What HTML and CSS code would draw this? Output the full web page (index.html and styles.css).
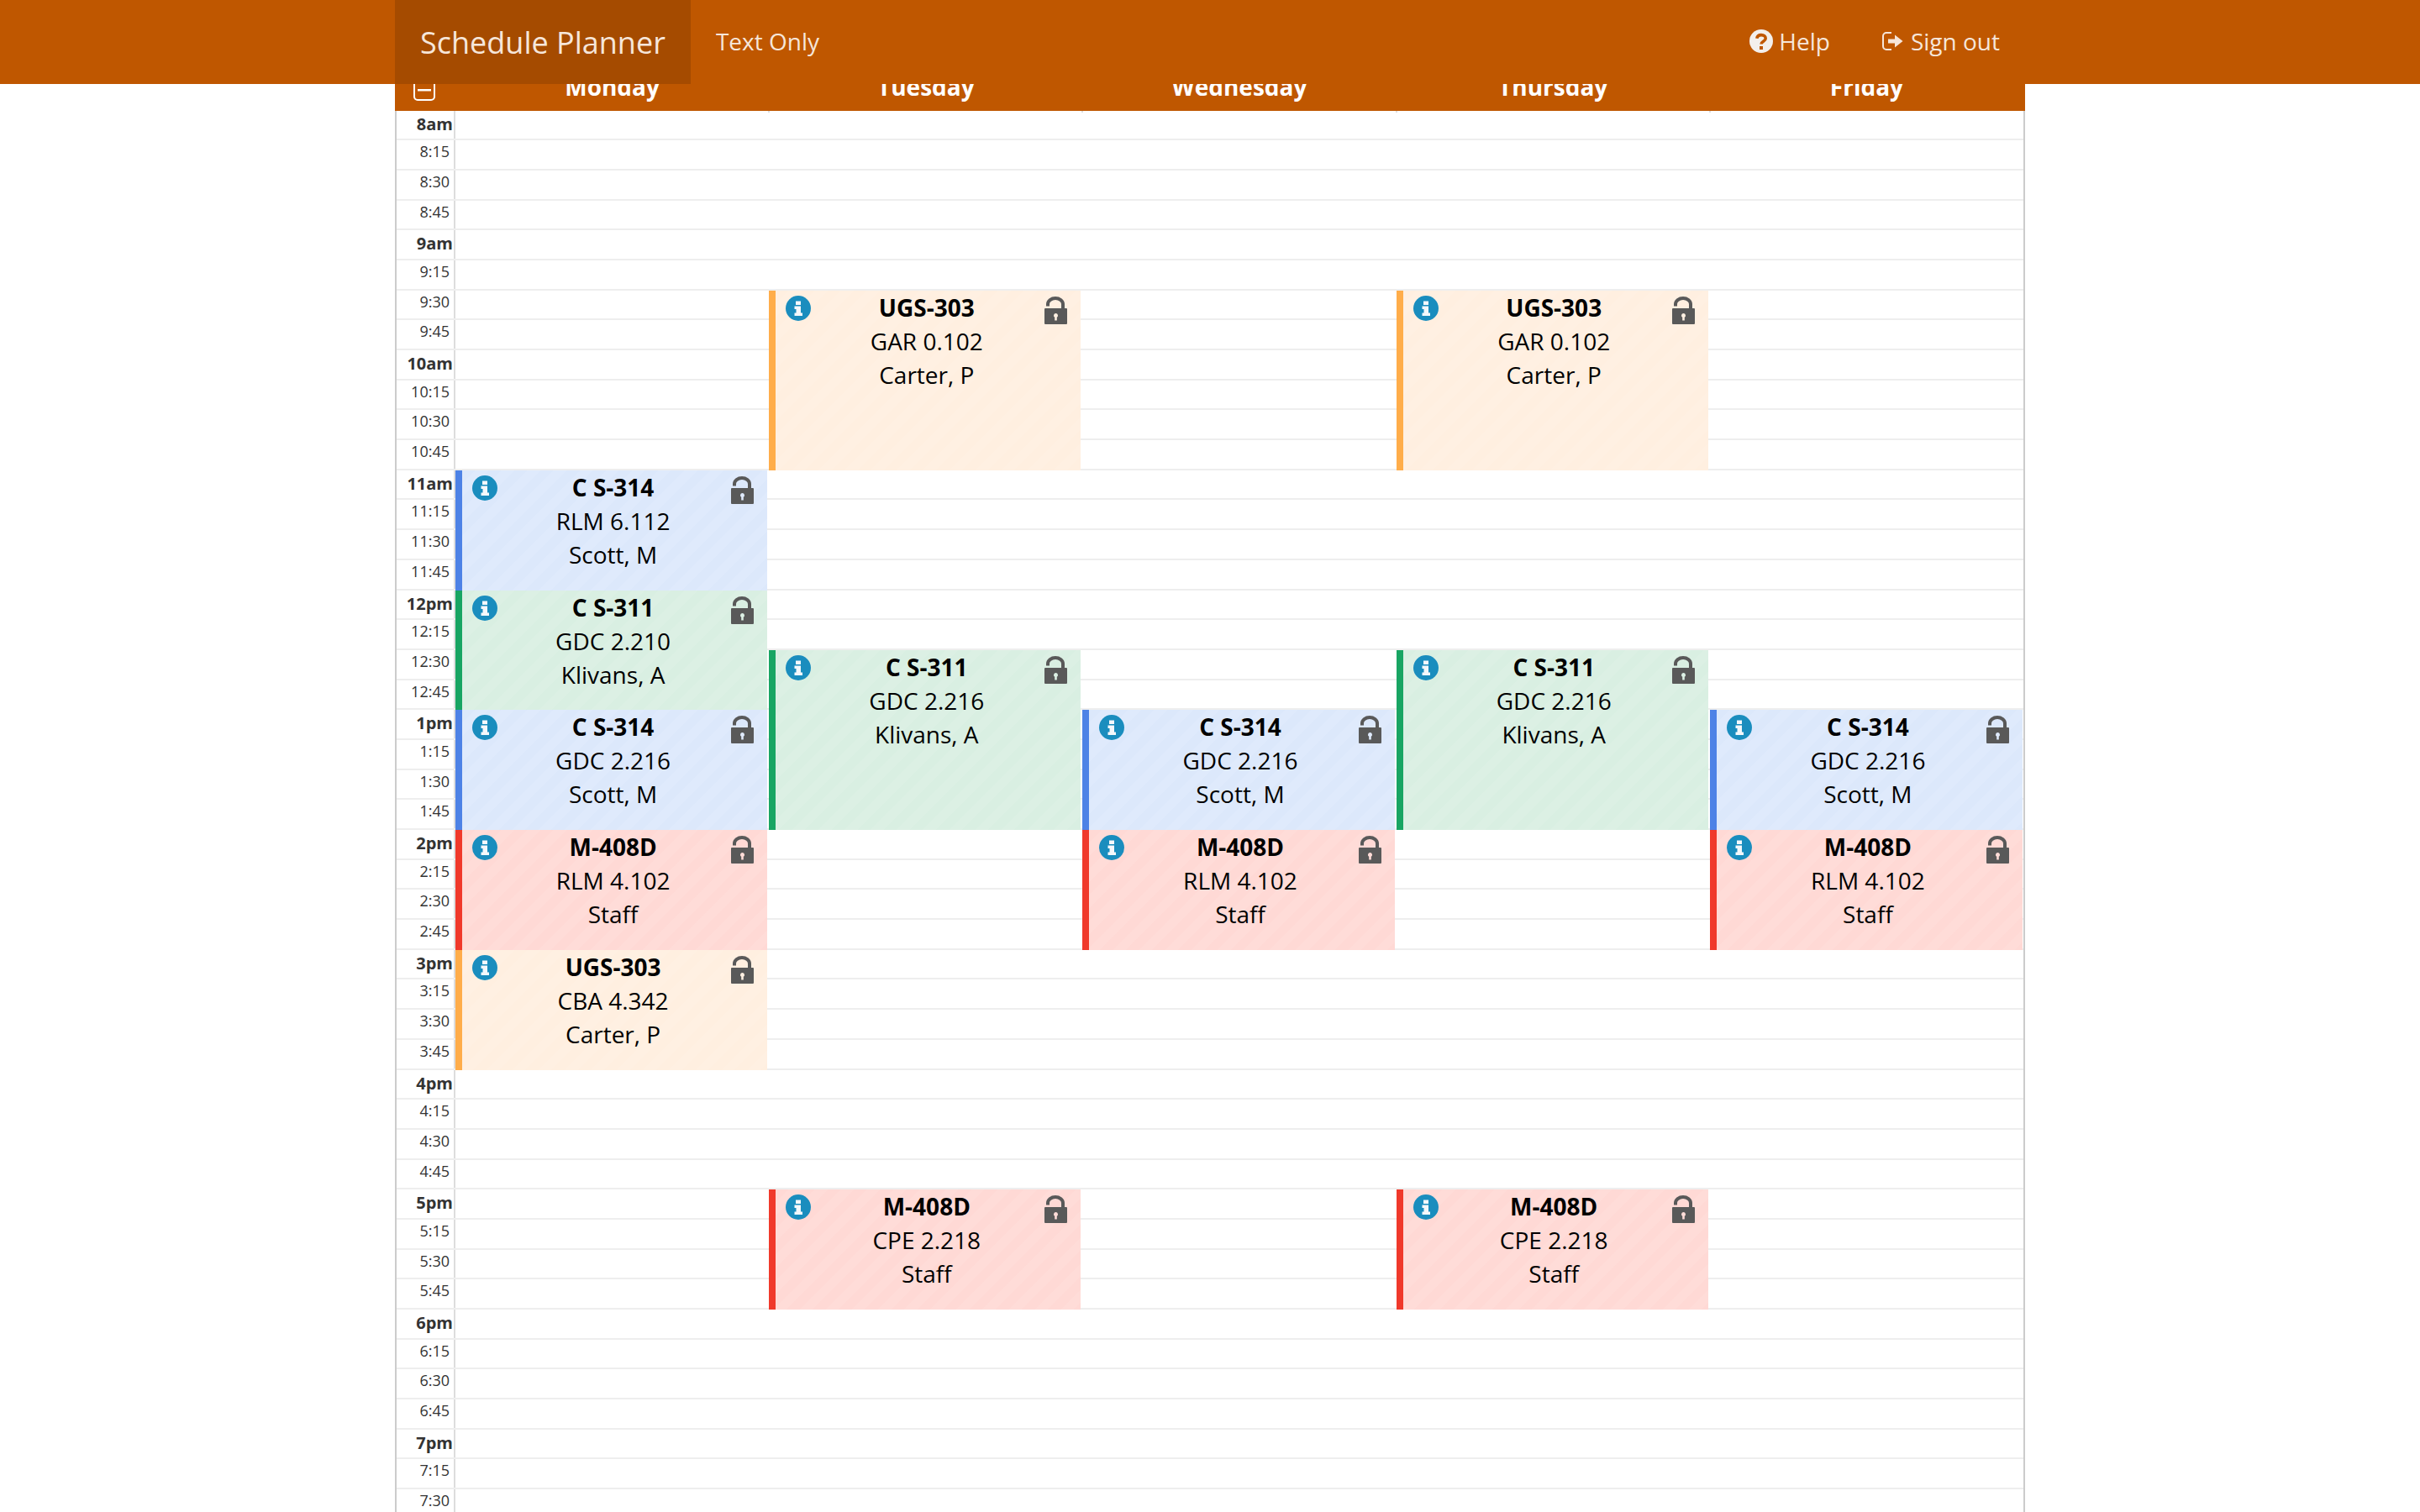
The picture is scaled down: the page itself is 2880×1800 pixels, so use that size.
FILE: index.html
```html
<!DOCTYPE html>
<html lang="en">
<head>
  <meta charset="UTF-8" />
  <title>Schedule Planner</title>
  <link rel="stylesheet" href="styles.css">
</head>
<body>

  <svg class="icon-defs" width="0" height="0">
    <symbol id="i-info" viewBox="0 0 30 30">
      <circle cx="15" cy="15" r="15" fill="#1a8dbe"/>
      <path fill="#f4f8fb" d="M12 6.500h6v4.500h-6zM10.500 12.500h7.500v8h2v3.500h-9.500v-3.500h2v-4.500h-2z"/>
    </symbol>
    <symbol id="i-lock" viewBox="0 0 27 33">
      <path fill="#595959" fill-rule="evenodd" d="M1 14h25a1 1 0 0 1 1 1v17a1 1 0 0 1-1 1h-25a1 1 0 0 1-1-1v-17a1 1 0 0 1 1-1zM13.500 20a2.600 2.600 0 0 0-1.300 4.800v3.700h2.600v-3.700a2.600 2.600 0 0 0-1.300-4.800z"/>
      <path fill="none" stroke="#595959" stroke-width="4" d="M4 11.500v-2.500a9 7 0 0 1 18 0v6"/>
    </symbol>
    <symbol id="i-help" viewBox="0 0 28 28">
      <circle cx="14" cy="14" r="14" fill="#f3efec"/>
      <path fill="none" stroke="#bf5700" stroke-width="3.600" d="M8.800 10.800c.4-2.800 2.500-4.200 5.200-4.200 3 0 5.200 1.700 5.200 4.100 0 3.600-5.200 3.500-5.200 6.900"/>
      <rect x="12" y="20" width="4" height="4" fill="#bf5700"/>
    </symbol>
    <symbol id="i-signout" viewBox="0 0 25 22">
      <path fill="none" stroke="#f6e6da" stroke-width="2" d="M11 1h-6a4 4 0 0 0-4 4v12a4 4 0 0 0 4 4h6"/>
      <path fill="#f6e6da" d="M7 8.500h8v-5l9.500 7.500-9.500 7.500v-5h-8z"/>
    </symbol>
    <symbol id="i-collapse" viewBox="0 0 26 32">
      <rect x="1" y="1" width="24" height="30" rx="4" fill="none" stroke="#fff" stroke-width="2"/>
      <rect x="5" y="18" width="16" height="2.500" fill="#fff"/>
    </symbol>
  </svg>

  <div class="page">

    <nav class="topbar">
      <div class="topbar-inner">
        <a class="brand">Schedule Planner</a>
        <a class="nav-link nav-text">Text Only</a>
        <div class="nav-right">
          <a class="nav-link nav-help"><svg class="help-icon"><use href="#i-help"/></svg>Help</a>
          <a class="nav-link nav-signout"><svg class="signout-icon"><use href="#i-signout"/></svg>Sign out</a>
        </div>
      </div>
    </nav>

    <div class="week-head">
      <div class="head-corner"><svg class="collapse-icon"><use href="#i-collapse"/></svg></div>
      <div class="head-day">Monday</div>
      <div class="head-day">Tuesday</div>
      <div class="head-day">Wednesday</div>
      <div class="head-day">Thursday</div>
      <div class="head-day">Friday</div>
    </div>

    <div class="week-grid">
      <div class="row"><div class="time hour">8am</div></div>
      <div class="row"><div class="time">8:15</div></div>
      <div class="row"><div class="time">8:30</div></div>
      <div class="row"><div class="time">8:45</div></div>
      <div class="row"><div class="time hour">9am</div></div>
      <div class="row"><div class="time">9:15</div></div>
      <div class="row"><div class="time">9:30</div></div>
      <div class="row"><div class="time">9:45</div></div>
      <div class="row"><div class="time hour">10am</div></div>
      <div class="row"><div class="time">10:15</div></div>
      <div class="row"><div class="time">10:30</div></div>
      <div class="row"><div class="time">10:45</div></div>
      <div class="row"><div class="time hour">11am</div></div>
      <div class="row"><div class="time">11:15</div></div>
      <div class="row"><div class="time">11:30</div></div>
      <div class="row"><div class="time">11:45</div></div>
      <div class="row"><div class="time hour">12pm</div></div>
      <div class="row"><div class="time">12:15</div></div>
      <div class="row"><div class="time">12:30</div></div>
      <div class="row"><div class="time">12:45</div></div>
      <div class="row"><div class="time hour">1pm</div></div>
      <div class="row"><div class="time">1:15</div></div>
      <div class="row"><div class="time">1:30</div></div>
      <div class="row"><div class="time">1:45</div></div>
      <div class="row"><div class="time hour">2pm</div></div>
      <div class="row"><div class="time">2:15</div></div>
      <div class="row"><div class="time">2:30</div></div>
      <div class="row"><div class="time">2:45</div></div>
      <div class="row"><div class="time hour">3pm</div></div>
      <div class="row"><div class="time">3:15</div></div>
      <div class="row"><div class="time">3:30</div></div>
      <div class="row"><div class="time">3:45</div></div>
      <div class="row"><div class="time hour">4pm</div></div>
      <div class="row"><div class="time">4:15</div></div>
      <div class="row"><div class="time">4:30</div></div>
      <div class="row"><div class="time">4:45</div></div>
      <div class="row"><div class="time hour">5pm</div></div>
      <div class="row"><div class="time">5:15</div></div>
      <div class="row"><div class="time">5:30</div></div>
      <div class="row"><div class="time">5:45</div></div>
      <div class="row"><div class="time hour">6pm</div></div>
      <div class="row"><div class="time">6:15</div></div>
      <div class="row"><div class="time">6:30</div></div>
      <div class="row"><div class="time">6:45</div></div>
      <div class="row"><div class="time hour">7pm</div></div>
      <div class="row"><div class="time">7:15</div></div>
      <div class="row"><div class="time">7:30</div></div>

      <div class="events">
        <!-- Monday -->
        <div class="event blue mon at-11 len-4">
          <svg class="info"><use href="#i-info"/></svg><svg class="lock"><use href="#i-lock"/></svg>
          <b>C S-314</b><span>RLM 6.112</span><span>Scott, M</span>
        </div>
        <div class="event green mon at-12 len-4">
          <svg class="info"><use href="#i-info"/></svg><svg class="lock"><use href="#i-lock"/></svg>
          <b>C S-311</b><span>GDC 2.210</span><span>Klivans, A</span>
        </div>
        <div class="event blue mon at-1 len-4">
          <svg class="info"><use href="#i-info"/></svg><svg class="lock"><use href="#i-lock"/></svg>
          <b>C S-314</b><span>GDC 2.216</span><span>Scott, M</span>
        </div>
        <div class="event red mon at-2 len-4">
          <svg class="info"><use href="#i-info"/></svg><svg class="lock"><use href="#i-lock"/></svg>
          <b>M-408D</b><span>RLM 4.102</span><span>Staff</span>
        </div>
        <div class="event orange mon at-3 len-4">
          <svg class="info"><use href="#i-info"/></svg><svg class="lock"><use href="#i-lock"/></svg>
          <b>UGS-303</b><span>CBA 4.342</span><span>Carter, P</span>
        </div>

        <!-- Tuesday -->
        <div class="event orange tue at-930 len-6">
          <svg class="info"><use href="#i-info"/></svg><svg class="lock"><use href="#i-lock"/></svg>
          <b>UGS-303</b><span>GAR 0.102</span><span>Carter, P</span>
        </div>
        <div class="event green tue at-1230 len-6">
          <svg class="info"><use href="#i-info"/></svg><svg class="lock"><use href="#i-lock"/></svg>
          <b>C S-311</b><span>GDC 2.216</span><span>Klivans, A</span>
        </div>
        <div class="event red tue at-5 len-4">
          <svg class="info"><use href="#i-info"/></svg><svg class="lock"><use href="#i-lock"/></svg>
          <b>M-408D</b><span>CPE 2.218</span><span>Staff</span>
        </div>

        <!-- Wednesday -->
        <div class="event blue wed at-1 len-4">
          <svg class="info"><use href="#i-info"/></svg><svg class="lock"><use href="#i-lock"/></svg>
          <b>C S-314</b><span>GDC 2.216</span><span>Scott, M</span>
        </div>
        <div class="event red wed at-2 len-4">
          <svg class="info"><use href="#i-info"/></svg><svg class="lock"><use href="#i-lock"/></svg>
          <b>M-408D</b><span>RLM 4.102</span><span>Staff</span>
        </div>

        <!-- Thursday -->
        <div class="event orange thu at-930 len-6">
          <svg class="info"><use href="#i-info"/></svg><svg class="lock"><use href="#i-lock"/></svg>
          <b>UGS-303</b><span>GAR 0.102</span><span>Carter, P</span>
        </div>
        <div class="event green thu at-1230 len-6">
          <svg class="info"><use href="#i-info"/></svg><svg class="lock"><use href="#i-lock"/></svg>
          <b>C S-311</b><span>GDC 2.216</span><span>Klivans, A</span>
        </div>
        <div class="event red thu at-5 len-4">
          <svg class="info"><use href="#i-info"/></svg><svg class="lock"><use href="#i-lock"/></svg>
          <b>M-408D</b><span>CPE 2.218</span><span>Staff</span>
        </div>

        <!-- Friday -->
        <div class="event blue fri at-1 len-4">
          <svg class="info"><use href="#i-info"/></svg><svg class="lock"><use href="#i-lock"/></svg>
          <b>C S-314</b><span>GDC 2.216</span><span>Scott, M</span>
        </div>
        <div class="event red fri at-2 len-4">
          <svg class="info"><use href="#i-info"/></svg><svg class="lock"><use href="#i-lock"/></svg>
          <b>M-408D</b><span>RLM 4.102</span><span>Staff</span>
        </div>
      </div>
    </div>

  </div>

</body>
</html>
```

FILE: styles.css
```css
:root {
  --orange: #bf5700;
  --orange-dark: #a54b00;
  --nav-text: #f6e6da;
  --row-h: 35.7px;
}
html, body {
  margin: 0;
  padding: 0;
  background: #fff;
}
body {
  font-family: "Open Sans", "Noto Sans", sans-serif;
  color: #000;
}
.icon-defs {
  display: none;
}
.page {
  height: 100vh;
  overflow: hidden;
}

/* top navigation */
.topbar {
  position: relative;
  z-index: 2;
  height: 100px;
  background: var(--orange);
}
.topbar-inner {
  display: flex;
  align-items: stretch;
  width: 1940px;
  height: 100%;
  margin: 0 auto;
  color: var(--nav-text);
}
.brand {
  display: flex;
  align-items: center;
  padding: 0 30px;
  font-size: 36px;
  background: var(--orange-dark);
}
.nav-link {
  display: flex;
  align-items: center;
  padding-bottom: 2px;
  font-size: 28px;
}
.nav-text {
  padding: 0 30px 2px;
}
.nav-right {
  display: flex;
  gap: 62px;
  margin-left: auto;
  padding-right: 30px;
}
.help-icon {
  width: 28px;
  height: 28px;
  margin-right: 7px;
}
.signout-icon {
  width: 25px;
  height: 22px;
  margin-right: 9px;
}

/* day header, its top half slides under the nav */
.week-head {
  position: relative;
  z-index: 1;
  display: grid;
  grid-template-columns: 70px repeat(5, 1fr);
  align-items: end;
  box-sizing: border-box;
  width: 1940px;
  height: 64px;
  margin: -32px auto 0;
  padding: 0 2px 9px;
  background: var(--orange);
  color: #fff;
}
.head-day {
  position: relative;
  font-size: 28px;
  font-weight: 700;
  line-height: 40px;
  text-align: center;
}
.head-day + .head-day::after {
  content: "";
  position: absolute;
  bottom: -11px;
  left: -1px;
  width: 2px;
  height: 2px;
  background: #ddd;
}
.head-corner {
  height: 40px;
}
.collapse-icon {
  display: block;
  width: 26px;
  height: 32px;
  margin: 5px 0 0 20px;
}

/* time rows */
.week-grid {
  position: relative;
  box-sizing: border-box;
  width: 1940px;
  margin: -0.5px auto 0;
  border-left: 2px solid #ccc;
  border-right: 2px solid #ccc;
}
.row {
  box-sizing: border-box;
  height: var(--row-h);
  border-bottom: 2px solid #eee;
}
.time {
  box-sizing: border-box;
  width: 70px;
  height: 100%;
  padding-right: 5px;
  border-right: 2px solid #ddd;
  color: #333;
  font-size: 18px;
  line-height: 26px;
  text-align: right;
}
.hour {
  padding-right: 1px;
  font-size: 20px;
  font-weight: 700;
  line-height: 32px;
}

/* classes on top of the rows */
.events {
  position: absolute;
  top: 0;
  right: 0;
  bottom: 0;
  left: 70px;
  display: grid;
  grid-template-columns: repeat(5, 1fr);
  grid-template-rows: repeat(47, var(--row-h));
}
.event {
  position: relative;
  display: flex;
  flex-direction: column;
  align-items: center;
  margin-right: 2px;
  padding-right: 4px;
  border-left: 8px solid;
  font-size: 28px;
  line-height: 40px;
  overflow: hidden;
}
.event b {
  font-weight: 700;
}
.info {
  position: absolute;
  top: 6px;
  left: 12px;
  width: 30px;
  height: 30px;
}
.lock {
  position: absolute;
  top: 7px;
  right: 16px;
  width: 27px;
  height: 33px;
}

.blue {
  border-color: #4d82e6;
  background: repeating-linear-gradient(135deg, #dce8fb 0 11px, #dfeafc 11px 22px);
}
.green {
  border-color: #18a563;
  background: repeating-linear-gradient(135deg, #d9efe2 0 11px, #dcf0e4 11px 22px);
}
.orange {
  border-color: #ffad4a;
  background: repeating-linear-gradient(135deg, #ffefe0 0 11px, #fff0e2 11px 22px);
}
.red {
  border-color: #f0392b;
  background: repeating-linear-gradient(135deg, #ffd9d5 0 11px, #ffdcd8 11px 22px);
}

.mon { grid-column: 1; }
.tue { grid-column: 2; }
.wed { grid-column: 3; }
.thu { grid-column: 4; }
.fri { grid-column: 5; margin-right: 1px; }

.at-930 { grid-row-start: 7; }
.at-11 { grid-row-start: 13; }
.at-12 { grid-row-start: 17; }
.at-1230 { grid-row-start: 19; }
.at-1 { grid-row-start: 21; }
.at-2 { grid-row-start: 25; }
.at-3 { grid-row-start: 29; }
.at-5 { grid-row-start: 37; }

.len-4 { grid-row-end: span 4; }
.len-6 { grid-row-end: span 6; }
```
